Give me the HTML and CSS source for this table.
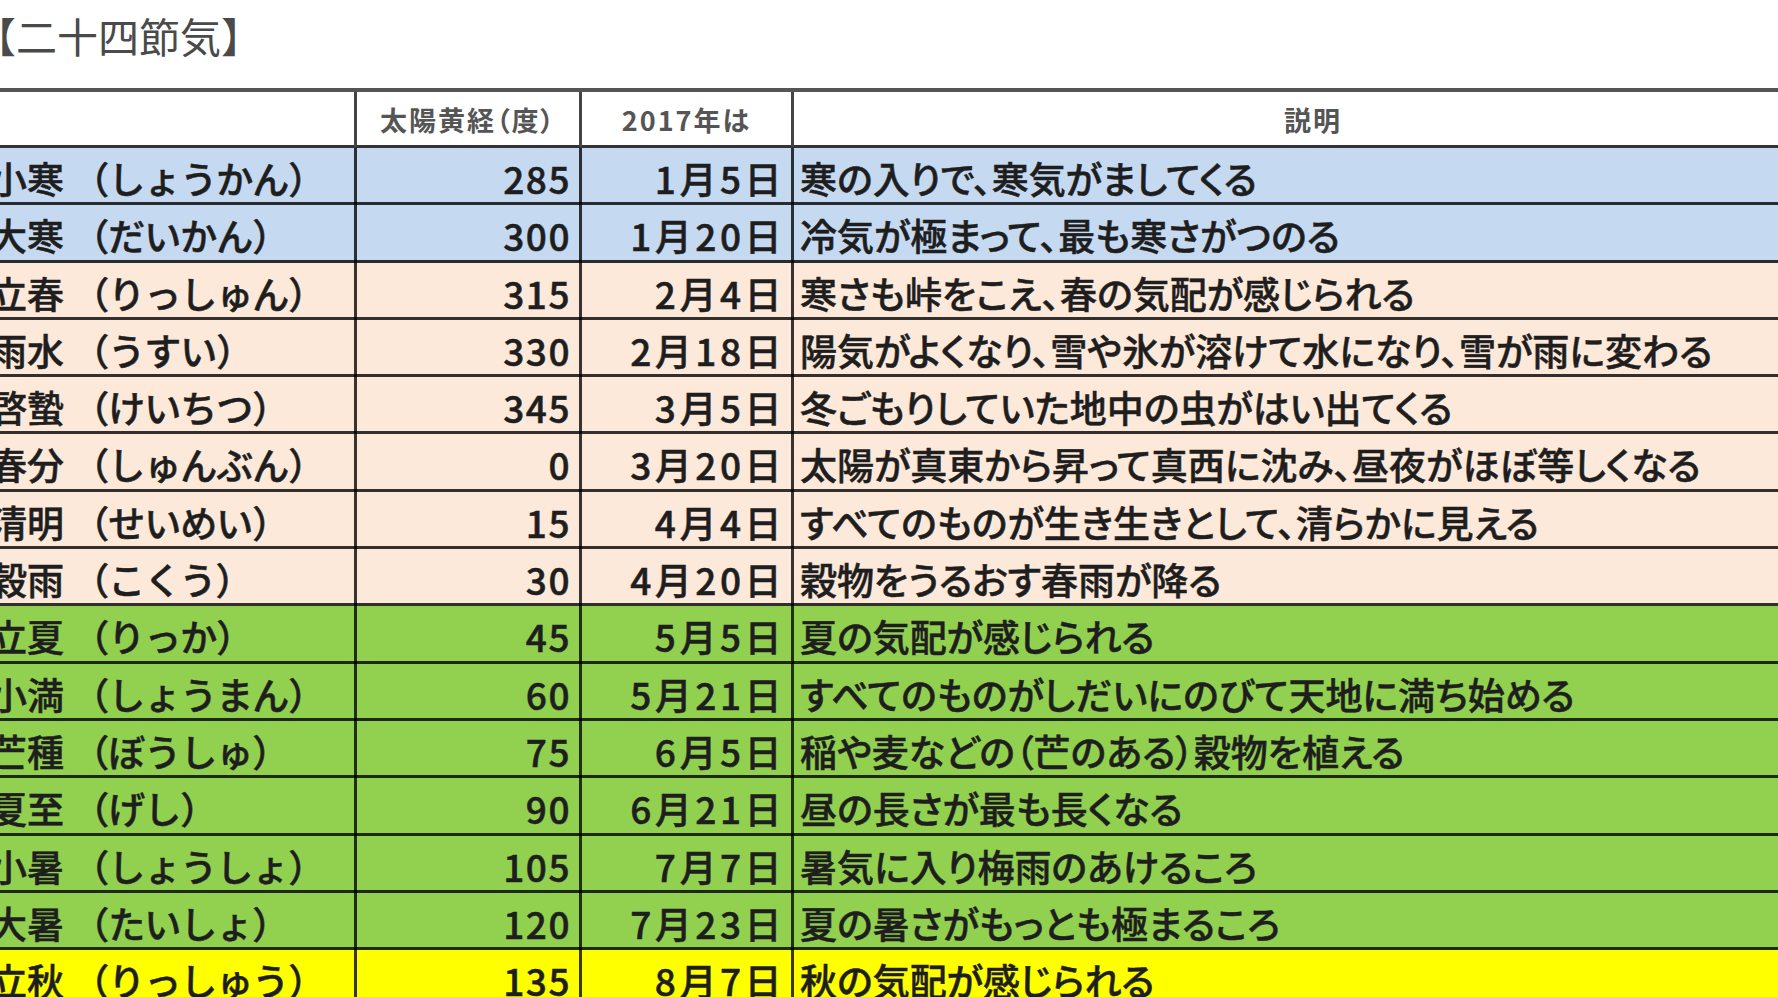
FILE: index.html
```html
<!DOCTYPE html>
<html lang="ja">
<head>
<meta charset="utf-8">
<title>二十四節気</title>
<link rel="stylesheet" href="styles.css">
</head>
<body>
<div class="page">
  <h1 class="title">【二十四節気】</h1>
  <div class="sheet">
    <div class="row head">
      <div class="c c1"></div>
      <div class="c c2">太陽黄経（度）</div>
      <div class="c c3">2017年は</div>
      <div class="c c4">説明</div>
    </div>
    <div class="row blue">
      <div class="c c1">小寒 <span class="yomi">（しょうかん）</span></div><div class="c c2">285</div><div class="c c3">1月5日</div><div class="c c4">寒の入りで、寒気がましてくる</div>
    </div>
    <div class="row blue">
      <div class="c c1">大寒 <span class="yomi">（だいかん）</span></div><div class="c c2">300</div><div class="c c3">1月20日</div><div class="c c4">冷気が極まって、最も寒さがつのる</div>
    </div>
    <div class="row peach">
      <div class="c c1">立春 <span class="yomi">（りっしゅん）</span></div><div class="c c2">315</div><div class="c c3">2月4日</div><div class="c c4">寒さも峠をこえ、春の気配が感じられる</div>
    </div>
    <div class="row peach">
      <div class="c c1">雨水 <span class="yomi">（うすい）</span></div><div class="c c2">330</div><div class="c c3">2月18日</div><div class="c c4">陽気がよくなり、雪や氷が溶けて水になり、雪が雨に変わる</div>
    </div>
    <div class="row peach">
      <div class="c c1">啓蟄 <span class="yomi">（けいちつ）</span></div><div class="c c2">345</div><div class="c c3">3月5日</div><div class="c c4">冬ごもりしていた地中の虫がはい出てくる</div>
    </div>
    <div class="row peach">
      <div class="c c1">春分 <span class="yomi">（しゅんぶん）</span></div><div class="c c2">0</div><div class="c c3">3月20日</div><div class="c c4">太陽が真東から昇って真西に沈み、昼夜がほぼ等しくなる</div>
    </div>
    <div class="row peach">
      <div class="c c1">清明 <span class="yomi">（せいめい）</span></div><div class="c c2">15</div><div class="c c3">4月4日</div><div class="c c4">すべてのものが生き生きとして、清らかに見える</div>
    </div>
    <div class="row peach">
      <div class="c c1">穀雨 <span class="yomi">（こくう）</span></div><div class="c c2">30</div><div class="c c3">4月20日</div><div class="c c4">穀物をうるおす春雨が降る</div>
    </div>
    <div class="row green">
      <div class="c c1">立夏 <span class="yomi">（りっか）</span></div><div class="c c2">45</div><div class="c c3">5月5日</div><div class="c c4">夏の気配が感じられる</div>
    </div>
    <div class="row green">
      <div class="c c1">小満 <span class="yomi">（しょうまん）</span></div><div class="c c2">60</div><div class="c c3">5月21日</div><div class="c c4">すべてのものがしだいにのびて天地に満ち始める</div>
    </div>
    <div class="row green">
      <div class="c c1">芒種 <span class="yomi">（ぼうしゅ）</span></div><div class="c c2">75</div><div class="c c3">6月5日</div><div class="c c4">稲や麦などの（芒のある）穀物を植える</div>
    </div>
    <div class="row green">
      <div class="c c1">夏至 <span class="yomi">（げし）</span></div><div class="c c2">90</div><div class="c c3">6月21日</div><div class="c c4">昼の長さが最も長くなる</div>
    </div>
    <div class="row green">
      <div class="c c1">小暑 <span class="yomi">（しょうしょ）</span></div><div class="c c2">105</div><div class="c c3">7月7日</div><div class="c c4">暑気に入り梅雨のあけるころ</div>
    </div>
    <div class="row green">
      <div class="c c1">大暑 <span class="yomi">（たいしょ）</span></div><div class="c c2">120</div><div class="c c3">7月23日</div><div class="c c4">夏の暑さがもっとも極まるころ</div>
    </div>
    <div class="row yellow">
      <div class="c c1">立秋 <span class="yomi">（りっしゅう）</span></div><div class="c c2">135</div><div class="c c3">8月7日</div><div class="c c4">秋の気配が感じられる</div>
    </div>
  </div>
</div>
</body>
</html>
```

FILE: styles.css
```css
html, body {
  margin: 0;
  padding: 0;
  background: #ffffff;
}

body {
  width: 1778px;
  height: 997px;
  overflow: hidden;
  font-family: "Noto Sans CJK JP", "Noto Sans", sans-serif;
  color: #1e1e1e;
}

.page {
  width: 1846px;
  margin-left: -14px;
}

.title {
  margin: 0 0 0 -11px;
  height: 88px;
  font-size: 41px;
  font-weight: 400;
  line-height: 70px;
  color: #4a4a4a;
}

.sheet {
  display: flex;
  flex-direction: column;
}

.row {
  display: grid;
  grid-template-columns: 371px 225px 212px 1fr;
  height: 57.3px;
  box-sizing: border-box;
  border-bottom: 3px solid rgba(0, 0, 0, 0.8);
}

.row.head {
  height: 60px;
  border-top: 4px solid #555555;
  border-bottom-color: #333333;
  background: #ffffff;
}

.blue { background: #c5d9f1; }
.peach { background: #fce9da; }
.green { background: #92d050; }
.yellow { background: #ffff00; }

.c {
  font-size: 37px;
  font-weight: 500;
  line-height: 60px;
  white-space: nowrap;
  -webkit-text-stroke: 0.5px currentColor;
}

.c1, .c2, .c3 {
  border-right: 3px solid rgba(0, 0, 0, 0.78);
}

.c1 { padding-left: 4px; }
.yomi { letter-spacing: -1px; }
.c2 { text-align: right; padding-right: 8px; letter-spacing: 1.5px; }
.c3 { text-align: right; padding-right: 6px; letter-spacing: 3.5px; }
.c4 { padding-left: 6px; font-feature-settings: "palt"; }

.head .c {
  font-size: 27px;
  font-weight: 700;
  line-height: 55px;
  letter-spacing: 2px;
  color: #555555;
  text-align: center;
  padding: 0;
  -webkit-text-stroke: 0;
  font-feature-settings: "palt";
}

.head .c1, .head .c2, .head .c3 {
  border-right-color: #444444;
}
```
